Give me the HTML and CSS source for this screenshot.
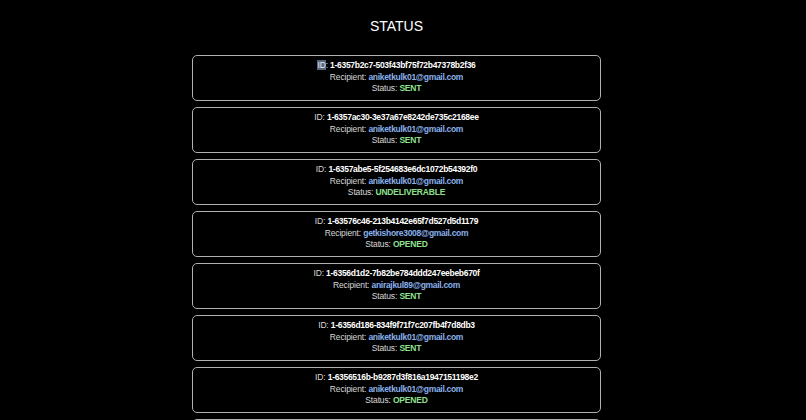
FILE: index.html
```html
<!DOCTYPE html>
<html>
<head>
<meta charset="utf-8">
<link rel="stylesheet" href="styles.css">
</head>
<body>
<div class="page">
  <h1 class="title">STATUS</h1>
  <div class="list">
    <div class="card">
      <div class="line"><span class="sel">ID</span>: <b class="val">1-6357b2c7-503f43bf75f72b47378b2f36</b></div>
      <div class="line">Recipient: <b class="email">aniketkulk01@gmail.com</b></div>
      <div class="line">Status: <b class="status">SENT</b></div>
    </div>
    <div class="card">
      <div class="line">ID: <b class="val">1-6357ac30-3e37a67e8242de735c2168ee</b></div>
      <div class="line">Recipient: <b class="email">aniketkulk01@gmail.com</b></div>
      <div class="line">Status: <b class="status">SENT</b></div>
    </div>
    <div class="card">
      <div class="line">ID: <b class="val">1-6357abe5-5f254683e6dc1072b54392f0</b></div>
      <div class="line">Recipient: <b class="email">aniketkulk01@gmail.com</b></div>
      <div class="line">Status: <b class="status">UNDELIVERABLE</b></div>
    </div>
    <div class="card">
      <div class="line">ID: <b class="val">1-63576c46-213b4142e65f7d527d5d1179</b></div>
      <div class="line">Recipient: <b class="email">getkishore3008@gmail.com</b></div>
      <div class="line">Status: <b class="status">OPENED</b></div>
    </div>
    <div class="card">
      <div class="line">ID: <b class="val">1-6356d1d2-7b82be784ddd247eebeb670f</b></div>
      <div class="line">Recipient: <b class="email">anirajkul89@gmail.com</b></div>
      <div class="line">Status: <b class="status">SENT</b></div>
    </div>
    <div class="card">
      <div class="line">ID: <b class="val">1-6356d186-834f9f71f7c207fb4f7d8db3</b></div>
      <div class="line">Recipient: <b class="email">aniketkulk01@gmail.com</b></div>
      <div class="line">Status: <b class="status">SENT</b></div>
    </div>
    <div class="card">
      <div class="line">ID: <b class="val">1-6356516b-b9287d3f816a1947151198e2</b></div>
      <div class="line">Recipient: <b class="email">aniketkulk01@gmail.com</b></div>
      <div class="line">Status: <b class="status">OPENED</b></div>
    </div>
    <div class="card card-edge"></div>
  </div>
</div>
</body>
</html>
```
FILE: styles.css
```css
html, body {
  margin: 0;
  padding: 0;
  background: #000;
  height: 420px;
  overflow: hidden;
}
body {
  font-family: "Liberation Sans", Arial, sans-serif;
  color: #e6e6e6;
}
.page {
  width: 793px;
  display: flex;
  flex-direction: column;
  align-items: center;
}
.title {
  margin: 18px 0 0 0;
  height: 37px;
  font-size: 14px;
  line-height: 16px;
  font-weight: normal;
  color: #fff;
}
.list {
  display: flex;
  flex-direction: column;
  gap: 6px;
  width: 409px;
}
.card {
  border: 1.2px solid #b0b0b0;
  border-radius: 5px;
  padding: 4px 0 5.5px;
  text-align: center;
  font-size: 8.5px;
  line-height: 11.5px;
  letter-spacing: -0.15px;
}
.card-edge {
  height: 34.5px;
}
.line {
  color: #d8d8d8;
}
.val {
  color: #fff;
  font-weight: bold;
  letter-spacing: -0.3px;
}
.email {
  color: #8ab0ec;
  font-weight: bold;
  letter-spacing: -0.3px;
}
.status {
  color: #8fe08f;
  font-weight: bold;
  letter-spacing: -0.2px;
}
.sel {
  background: #56657f;
  color: #e8ecf4;
}
```
